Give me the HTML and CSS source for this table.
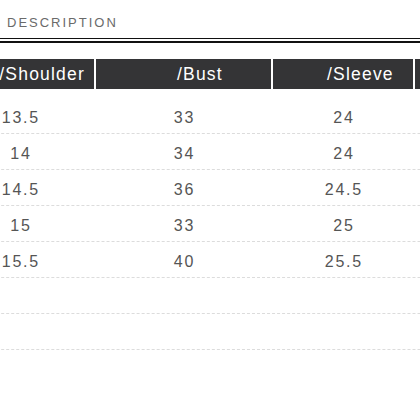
FILE: index.html
```html
<!DOCTYPE html>
<html>
<head>
<meta charset="utf-8">
<link rel="stylesheet" href="styles.css">
</head>
<body>
<div class="page">
  <div class="title">DESCRIPTION</div>
  <div class="rule"></div>
  <div class="table">
    <div class="head">
      <div class="cell c1"><span>/Shoulder</span></div>
      <div class="cell c2"><span>/Bust</span></div>
      <div class="cell c3"><span>/Sleeve</span></div>
      <div class="cell c4"></div>
    </div>
    <div class="body">
      <div class="row"><div class="c1">13.5</div><div class="c2">33</div><div class="c3">24</div><div class="c4"></div></div>
      <div class="row"><div class="c1">14</div><div class="c2">34</div><div class="c3">24</div><div class="c4"></div></div>
      <div class="row"><div class="c1">14.5</div><div class="c2">36</div><div class="c3">24.5</div><div class="c4"></div></div>
      <div class="row"><div class="c1">15</div><div class="c2">33</div><div class="c3">25</div><div class="c4"></div></div>
      <div class="row"><div class="c1">15.5</div><div class="c2">40</div><div class="c3">25.5</div><div class="c4"></div></div>
      <div class="row"><div class="c1"></div><div class="c2"></div><div class="c3"></div><div class="c4"></div></div>
      <div class="row"><div class="c1"></div><div class="c2"></div><div class="c3"></div><div class="c4"></div></div>
    </div>
  </div>
</div>
</body>
</html>
```

FILE: styles.css
```css
html, body {
  margin: 0;
  padding: 0;
  background: #fff;
}
.page {
  width: 420px;
  height: 420px;
  overflow: hidden;
  font-family: "Liberation Sans", Arial, sans-serif;
}
.title {
  padding: 16px 0 0 7px;
  font-size: 13px;
  line-height: 13px;
  letter-spacing: 2px;
  color: #6a6a6a;
}
.rule {
  margin-top: 9px;
  height: 2px;
  border-top: 1px solid #111;
  border-bottom: 2px solid #111;
}
.table {
  margin-top: 16px;
  margin-left: -54px;
  width: 620px;
}
.head {
  display: flex;
  gap: 2px;
  height: 30px;
}
.cell {
  background: #343436;
  color: #fff;
  display: flex;
  align-items: center;
  font-size: 17.5px;
  letter-spacing: 1.2px;
}
.c1 { width: 148px; }
.c2 { width: 175px; }
.c3 { width: 140px; }
.c4 { width: 140px; }
.head .c1 { justify-content: flex-end; padding-right: 9px; box-sizing: border-box; }
.head .c2 { padding-left: 81px; box-sizing: border-box; }
.head .c3 { padding-left: 54px; box-sizing: border-box; }
.body {
  margin-top: 9px;
}
.row {
  display: flex;
  gap: 2px;
  height: 35px;
  border-bottom: 1px dashed #dcdcdc;
}
.row > div {
  box-sizing: border-box;
  padding-top: 4px;
  line-height: 31px;
  text-align: center;
  font-size: 16px;
  letter-spacing: 1.8px;
  text-indent: 1.8px;
  color: #555;
}
```
